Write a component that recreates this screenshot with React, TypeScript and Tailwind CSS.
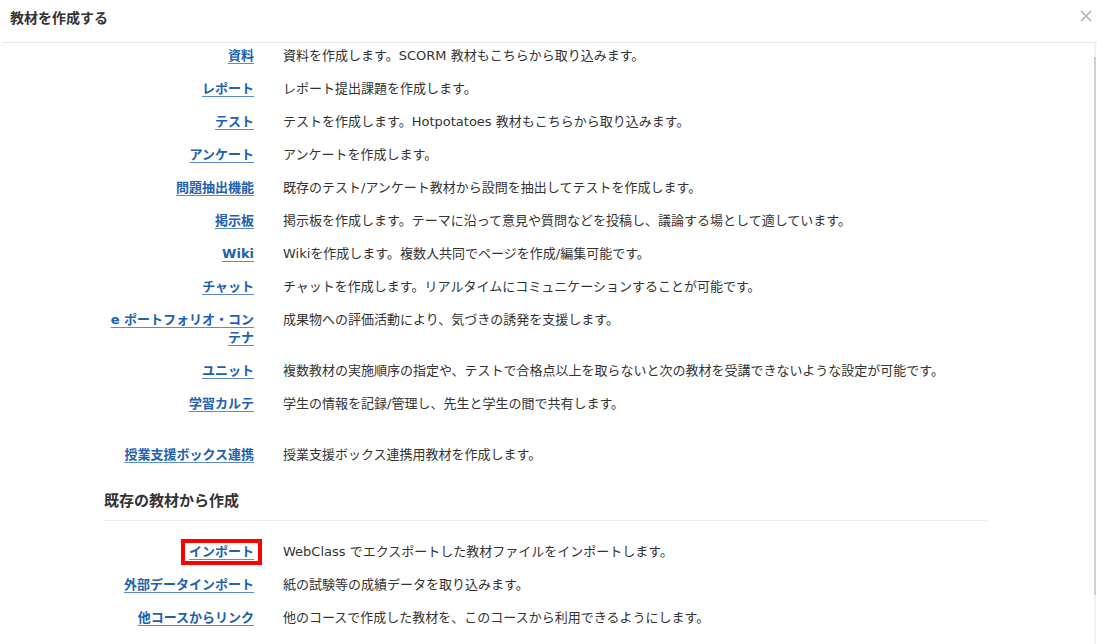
import React from "react";

interface Item {
  label: string;
  desc: string;
  gapBefore?: boolean;
  marked?: boolean;
}

const createItems: Item[] = [
  { label: "資料", desc: "資料を作成します。SCORM 教材もこちらから取り込みます。" },
  { label: "レポート", desc: "レポート提出課題を作成します。" },
  { label: "テスト", desc: "テストを作成します。Hotpotatoes 教材もこちらから取り込みます。" },
  { label: "アンケート", desc: "アンケートを作成します。" },
  { label: "問題抽出機能", desc: "既存のテスト/アンケート教材から設問を抽出してテストを作成します。" },
  { label: "掲示板", desc: "掲示板を作成します。テーマに沿って意見や質問などを投稿し、議論する場として適しています。" },
  { label: "Wiki", desc: "Wikiを作成します。複数人共同でページを作成/編集可能です。" },
  { label: "チャット", desc: "チャットを作成します。リアルタイムにコミュニケーションすることが可能です。" },
  { label: "e ポートフォリオ・コンテナ", desc: "成果物への評価活動により、気づきの誘発を支援します。" },
  { label: "ユニット", desc: "複数教材の実施順序の指定や、テストで合格点以上を取らないと次の教材を受講できないような設定が可能です。" },
  { label: "学習カルテ", desc: "学生の情報を記録/管理し、先生と学生の間で共有します。" },
  { label: "授業支援ボックス連携", desc: "授業支援ボックス連携用教材を作成します。", gapBefore: true },
];

const existingItems: Item[] = [
  { label: "インポート", desc: "WebClass でエクスポートした教材ファイルをインポートします。", marked: true },
  { label: "外部データインポート", desc: "紙の試験等の成績データを取り込みます。" },
  { label: "他コースからリンク", desc: "他のコースで作成した教材を、このコースから利用できるようにします。" },
];

const Row: React.FC<{ item: Item }> = ({ item }) => (
  <div className={`flex items-start mb-[15px] ${item.gapBefore ? "pt-[18px]" : ""}`}>
    <div className="w-[150px] shrink-0 text-right">
      <span className="relative inline-block">
        <a
          href="#"
          className="font-bold text-[#2160ad] underline underline-offset-[3px] decoration-[#5d8bc7]"
        >
          {item.label}
        </a>
        {item.marked && (
          <span className="absolute -left-[8px] -right-[8px] -top-[4px] -bottom-[4px] border-4 border-[#ff0000] pointer-events-none" />
        )}
      </span>
    </div>
    <div className="ml-[29px] text-[#333333]">{item.desc}</div>
  </div>
);

export default function App() {
  return (
    <div
      className="relative w-[1097px] h-[644px] overflow-hidden bg-white text-[13px] leading-[18px] text-[#333333]"
      style={{ fontFamily: '"DejaVu Sans", "Noto Sans CJK JP", sans-serif' }}
    >
      {/* Header */}
      <div className="ml-[2px] h-[43px] border-b border-[#e6e6e6] flex items-start justify-between pt-[9px] pl-[8px] pr-[5px]">
        <h1 className="font-bold text-[14px] leading-[18px] text-[#333333]">教材を作成する</h1>
        <button className="mt-[1px] text-[#b3b3b3]" aria-label="close">
          <svg width="12" height="12" viewBox="0 0 12 12" fill="none">
            <path d="M1 1L11 11M11 1L1 11" stroke="currentColor" strokeWidth="1.6" />
          </svg>
        </button>
      </div>

      {/* Body */}
      <div className="flex">
        <div className="flex-1 pt-[4px]">
          <div className="ml-[104px] w-[883px]">
            {createItems.map((item) => (
              <Row key={item.label} item={item} />
            ))}

            <h2 className="mt-[27px] pb-[9px] border-b border-[#ececec] font-bold text-[15px] leading-[20px] text-[#333333]">
              既存の教材から作成
            </h2>

            <div className="pt-[22px]">
              {existingItems.map((item) => (
                <Row key={item.label} item={item} />
              ))}
            </div>
          </div>
        </div>

        {/* scrollbar */}
        <div className="w-[2px] mr-[1px] h-[601px] bg-[#f2f2f2] flex flex-col">
          <div className="h-[14px]" />
          <div className="h-[538px] bg-[#cfcfcf]" />
        </div>
      </div>
    </div>
  );
}
